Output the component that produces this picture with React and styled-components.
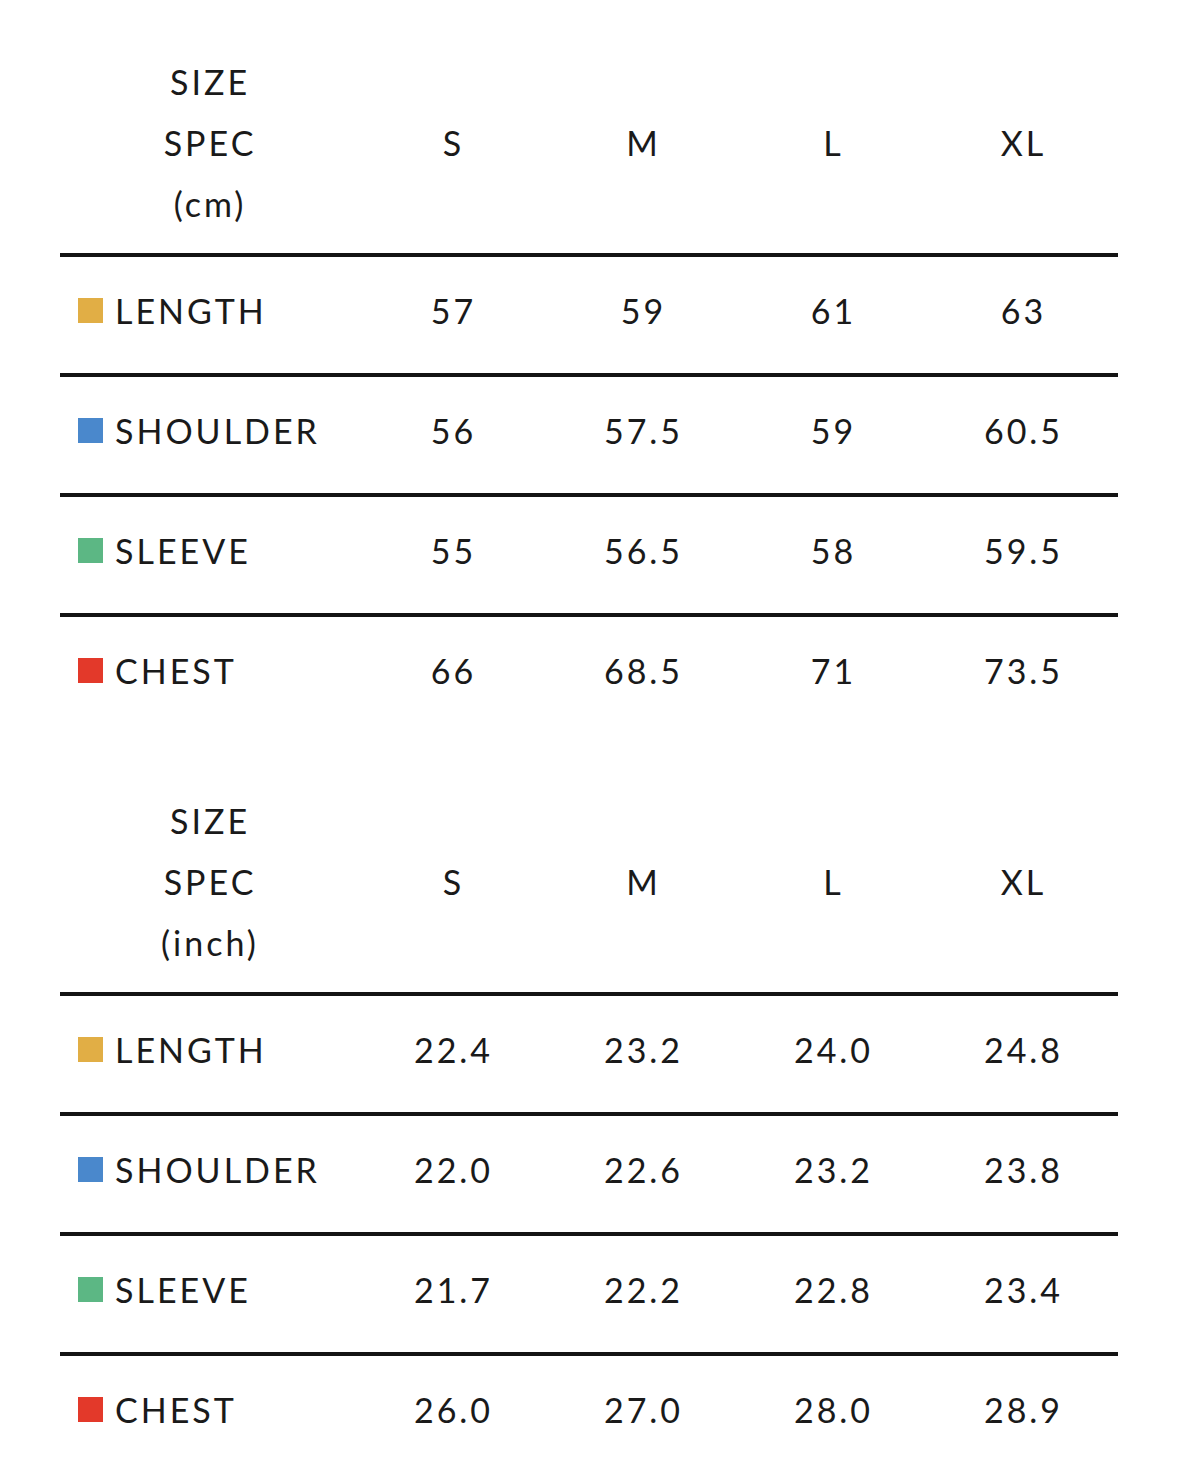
import React from "react";
import styled, { createGlobalStyle } from "styled-components";

const Global = createGlobalStyle`
  html, body { margin: 0; padding: 0; background: #ffffff; }
  body { font-family: Lato, "Noto Sans", "Liberation Sans", sans-serif; color: #1a1a1a; }
`;

const Page = styled.div`
  width: 1179px;
  padding: 51px 0 20px 60px;
  box-sizing: border-box;
  display: flex;
  flex-direction: column;
  gap: 57px;
`;

const Table = styled.div`
  width: 1058px;
  display: flex;
  flex-direction: column;
`;

const Row = styled.div`
  display: grid;
  grid-template-columns: 297px repeat(4, 190px);
  align-items: center;
  ${(p) =>
    p.$header
      ? `padding-bottom: 19px;`
      : `border-top: 4px solid #141414; box-sizing: content-box; height: 106px; padding-bottom: 10px;`}
`;

const Cell = styled.div`
  font-size: 34px;
  letter-spacing: 3px;
  text-align: center;
  line-height: 61px;
  white-space: nowrap;
  padding-left: 3px;
`;

const HeadLabel = styled(Cell)`
  display: flex;
  flex-direction: column;
  align-items: center;
`;

const Label = styled.div`
  display: flex;
  align-items: center;
  gap: 12px;
  padding-left: 18px;
  font-size: 34px;
  letter-spacing: 3px;
  line-height: 61px;
  white-space: nowrap;
`;

const Swatch = styled.span`
  width: 25px;
  height: 25px;
  background: ${(p) => p.$color};
  flex: none;
`;

const COLORS = {
  LENGTH: "#e1ae45",
  SHOULDER: "#4a88cc",
  SLEEVE: "#5cb784",
  CHEST: "#e3392a",
};

const SIZES = ["S", "M", "L", "XL"];

const TABLES = [
  {
    unit: "(cm)",
    rows: [
      ["LENGTH", ["57", "59", "61", "63"]],
      ["SHOULDER", ["56", "57.5", "59", "60.5"]],
      ["SLEEVE", ["55", "56.5", "58", "59.5"]],
      ["CHEST", ["66", "68.5", "71", "73.5"]],
    ],
  },
  {
    unit: "(inch)",
    rows: [
      ["LENGTH", ["22.4", "23.2", "24.0", "24.8"]],
      ["SHOULDER", ["22.0", "22.6", "23.2", "23.8"]],
      ["SLEEVE", ["21.7", "22.2", "22.8", "23.4"]],
      ["CHEST", ["26.0", "27.0", "28.0", "28.9"]],
    ],
  },
];

export default function App() {
  return (
    <>
      <Global />
      <Page>
        {TABLES.map((t) => (
          <Table key={t.unit}>
            <Row $header>
              <HeadLabel>
                <span>SIZE</span>
                <span>SPEC</span>
                <span>{t.unit}</span>
              </HeadLabel>
              {SIZES.map((s) => (
                <Cell key={s}>{s}</Cell>
              ))}
            </Row>
            {t.rows.map(([name, vals]) => (
              <Row key={name}>
                <Label>
                  <Swatch $color={COLORS[name]} />
                  <span>{name}</span>
                </Label>
                {vals.map((v, i) => (
                  <Cell key={i}>{v}</Cell>
                ))}
              </Row>
            ))}
          </Table>
        ))}
      </Page>
    </>
  );
}
